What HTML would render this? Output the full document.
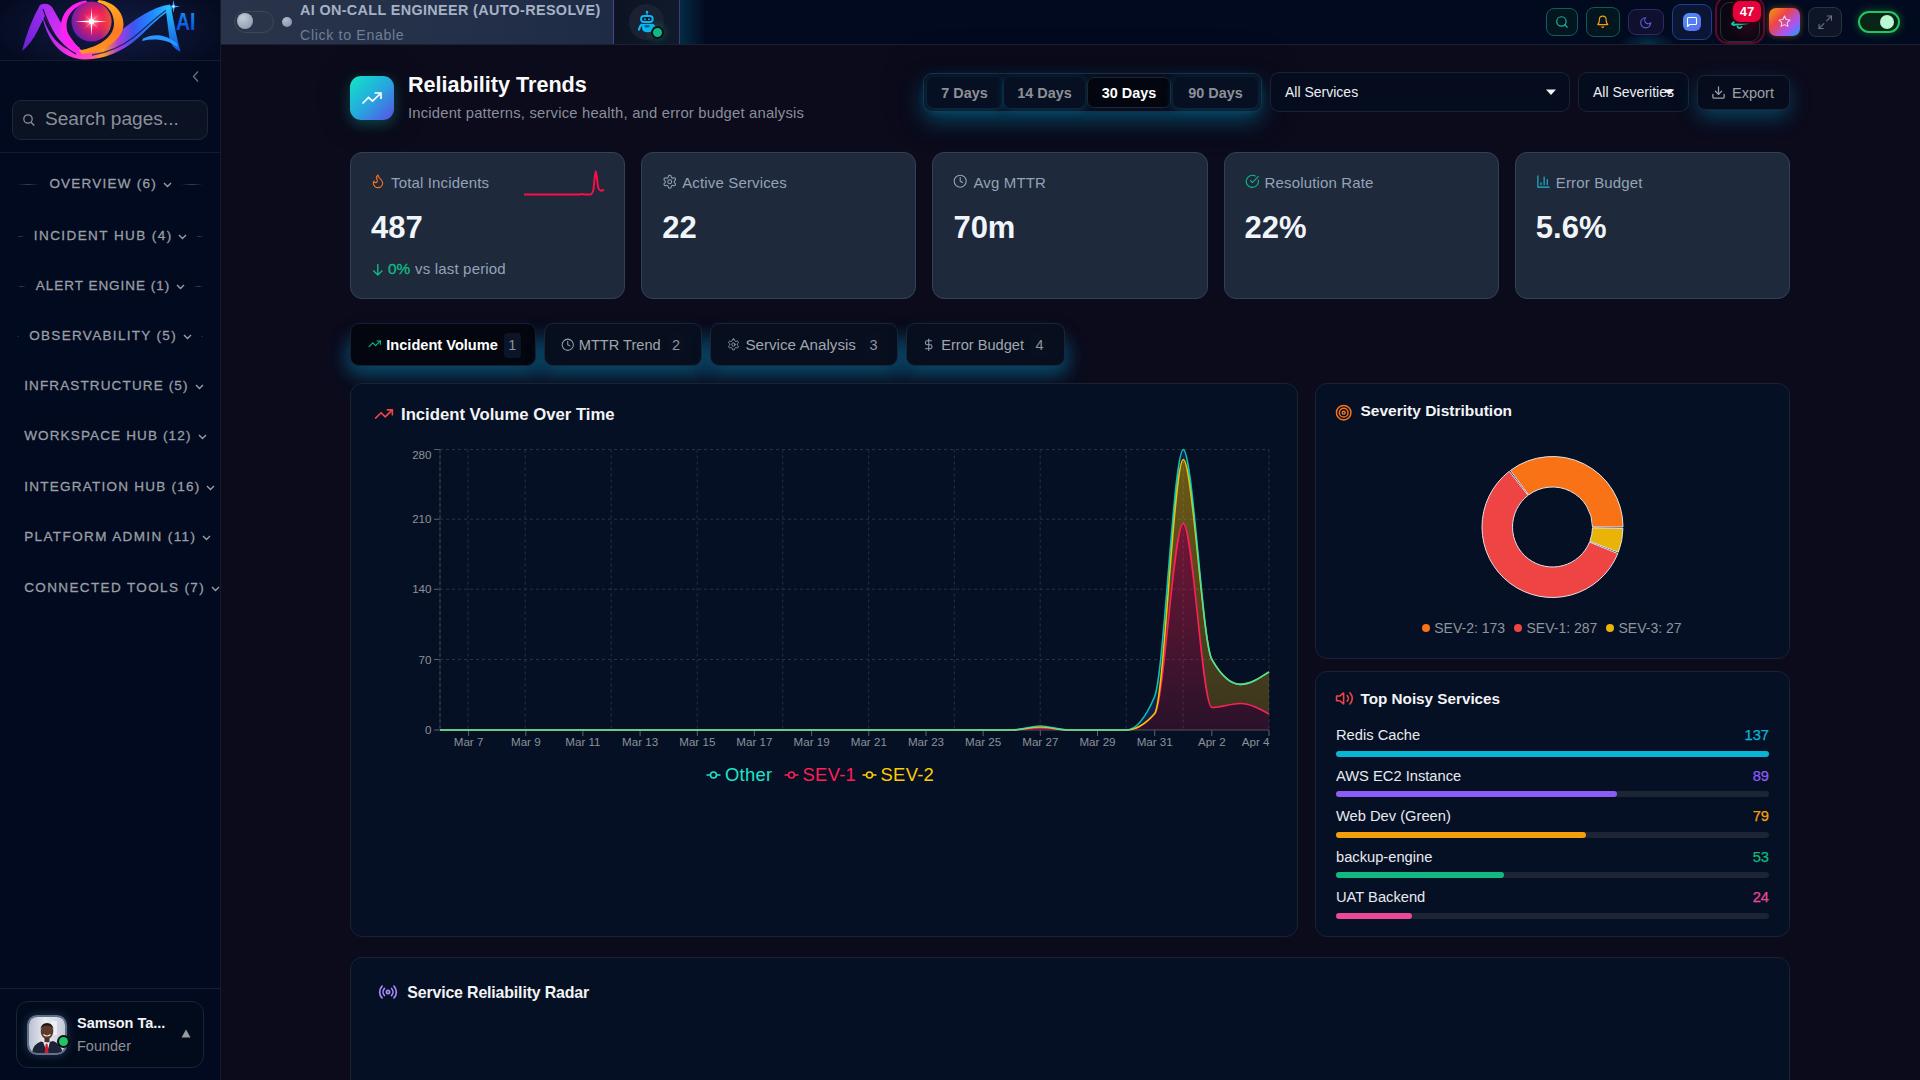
<!DOCTYPE html>
<html><head><meta charset="utf-8"><title>Reliability Trends</title>
<style>
*{box-sizing:border-box;margin:0;padding:0}
html,body{width:1920px;height:1080px;overflow:hidden;background:#0b0b1c;font-family:"Liberation Sans",sans-serif;color:#e5e7eb}
.abs{position:absolute}
.nw{white-space:nowrap}
#sidebar{position:absolute;left:0;top:0;width:221px;height:1080px;background:#010a1e;border-right:1px solid #141c2c}
#topbar{position:absolute;left:221px;top:0;width:1699px;height:45px;background:#020a1f;border-bottom:1px solid #1b2130}
.navsec{position:absolute;left:0;width:220px;height:20px}
.navsec .t{position:absolute;top:0;font-weight:normal;-webkit-text-stroke:0.3px #9b9ea5;font-size:13.5px;letter-spacing:1.3px;color:#9b9ea5;white-space:nowrap;line-height:20px}
.navsec .ln{position:absolute;top:10px;height:1px;background:linear-gradient(90deg,rgba(60,68,85,0),rgba(60,68,85,.9),rgba(60,68,85,0))}
.navsec svg{position:absolute;top:8px}
.card{position:absolute;border-radius:12px}
.kpi{background:#1e293b;border:1px solid #334157;top:152px;width:275.2px;height:147px}
.kpi .lbl{position:absolute;left:40px;top:21.3px;font-size:15px;color:#94a3b8;letter-spacing:.15px;white-space:nowrap;line-height:18px}
.kpi .val{position:absolute;left:20px;top:58px;font-size:31px;font-weight:bold;color:#f1f5f9;white-space:nowrap;line-height:34px}
.kpi svg.ic{position:absolute;left:20px;top:22px}
.tab{position:absolute;top:323px;height:43px;border-radius:9px;background:#070e1e;border:1px solid #1a2538;box-shadow:0 8px 18px -4px rgba(8,90,120,.55)}
.tab .tx{position:absolute;top:12px;font-size:14.6px;color:#a3a6ad;white-space:nowrap;line-height:18px}
.tab .bd{position:absolute;top:9px;width:17px;height:25px;border-radius:4px;background:#0b1527;color:#8e939c;font-size:14.5px;line-height:25px;text-align:center}
.panel{position:absolute;background:#061024;border:1px solid #192334;border-radius:12px}
.ptitle{position:absolute;font-size:17px;font-weight:bold;color:#f3f4f6;white-space:nowrap;line-height:20px}
</style></head>
<body>
<!-- SIDEBAR -->
<div id="sidebar">
  <div class="abs" style="left:0;top:0;width:220px;height:60px;background:radial-gradient(ellipse 120px 50px at 110px 28px,#131c42 0%,#0c1434 50%,#040b20 100%)"></div>
  <div class="abs" style="left:0;top:60px;width:220px;height:1px;background:#141b2b"></div>
  <!-- logo placeholder -->
  <div id="logo" class="abs" style="left:0;top:0;width:220px;height:60px"><svg width="220" height="60" viewBox="0 0 220 60">
<defs>
<linearGradient id="lgLeaf" x1="0" y1="1" x2="0.6" y2="0"><stop offset="0" stop-color="#6a1fd6"/><stop offset="1" stop-color="#9d2cf0"/></linearGradient>
<linearGradient id="lgRib" x1="0" y1="0" x2="1" y2="1"><stop offset="0" stop-color="#a42cf2"/><stop offset=".6" stop-color="#e02ff0"/><stop offset="1" stop-color="#ff2ee6"/></linearGradient>
<linearGradient id="lgSw" x1="44" y1="0" x2="172" y2="0" gradientUnits="userSpaceOnUse"><stop offset="0" stop-color="#9b2cf0"/><stop offset=".2" stop-color="#ff2fe2"/><stop offset=".36" stop-color="#ff4fb0"/><stop offset=".46" stop-color="#ff9d22"/><stop offset=".58" stop-color="#b03ad8"/><stop offset=".7" stop-color="#3d55f2"/><stop offset=".85" stop-color="#1f8cff"/><stop offset="1" stop-color="#2ac6ff"/></linearGradient>
<linearGradient id="lgOr" x1="0" y1="0" x2="0" y2="1"><stop offset="0" stop-color="#ffb21e"/><stop offset=".6" stop-color="#ff7a22"/><stop offset="1" stop-color="#ff9a1a"/></linearGradient>
<radialGradient id="lgSph" cx=".6" cy=".45" r=".7"><stop offset="0" stop-color="#ff4a6a"/><stop offset=".3" stop-color="#f01e5a"/><stop offset=".65" stop-color="#a01c8c"/><stop offset="1" stop-color="#4a22c0"/></radialGradient>
<linearGradient id="lgSph2" x1="0" y1="0" x2="1" y2="0"><stop offset="0" stop-color="#4020c0" stop-opacity=".0"/><stop offset=".7" stop-color="#ff5a20" stop-opacity="0"/><stop offset="1" stop-color="#ff6a1a" stop-opacity=".75"/></linearGradient>
<linearGradient id="lgA" x1="0" y1="0" x2="0" y2="1"><stop offset="0" stop-color="#27c2ff"/><stop offset="1" stop-color="#1456e0"/></linearGradient>
<linearGradient id="lgAI" x1="0" y1="0" x2="0" y2="1"><stop offset="0" stop-color="#139cff"/><stop offset="1" stop-color="#0a3ed0"/></linearGradient>
<radialGradient id="lgGlow" cx=".5" cy=".5" r=".5"><stop offset="0" stop-color="#fff" stop-opacity=".9"/><stop offset=".4" stop-color="#ffb0c0" stop-opacity=".45"/><stop offset="1" stop-color="#ff4080" stop-opacity="0"/></radialGradient>
</defs>
<path d="M22,51 Q29,24 40,5 Q46,2 51,6 Q43,18 38,30 Q31,44 22,51Z" fill="url(#lgLeaf)"/>
<path d="M41,10 C47,34 60,51 80,52 C95,52 105,44 118,33 C135,19 152,7 170,4.5 L172,9 C160,16 150,27 138,38 C122,52 105,59 85,59.5 C62,59 46,42 41,10Z" fill="url(#lgSw)"/>
<path d="M41,6 Q47,2 52,7 Q61,24 71,38 Q77,47 84,52 L75,55 Q62,46 52,31 Q45,19 41,6Z" fill="url(#lgRib)"/>
<path d="M43,9 Q48,24 55,35 Q63,47 76,54" fill="none" stroke="#0c0f2e" stroke-width="1.1"/>
<path d="M171,7 C158,15 146,27 134,37 C120,48 106,53 92,55" fill="none" stroke="#0e1a50" stroke-width="1.3" opacity=".8"/>
<circle cx="91.5" cy="21.5" r="22.5" fill="#101545"/>
<path d="M86,0.5 C72,2 62,12 61,25 C60,36 66,45 76,51 L80,48 C71,42 66.5,34 66.5,25 C67,14 75,5 88,3Z" fill="#ff22ee"/>
<path d="M99,0 C114,2 123.5,12 123.5,24 C123.5,39 106,51 82,54 L79,50.5 C99,47 114,37 114,23.5 C114,12 107,4.5 97,2Z" fill="url(#lgOr)"/>
<circle cx="91.5" cy="21.5" r="20" fill="url(#lgSph)"/>
<circle cx="91.5" cy="21.5" r="20" fill="url(#lgSph2)"/>
<circle cx="91.5" cy="21.5" r="9" fill="url(#lgGlow)"/>
<path d="M91.5,8 L92.4,20.6 L107,21.5 L92.4,22.4 L91.5,36 L90.6,22.4 L75,21.5 L90.6,20.6Z" fill="#fff"/>
<path d="M84,14 L92,21.5 L99,29 L91,21.5Z M99,14 L92,21.5 L84,29 L91,21.5Z" fill="#fff" opacity=".7"/>
<circle cx="91.5" cy="21.5" r="2.6" fill="#fff"/>
<path d="M165.5,7 L171,6.5 C174,24 177,39 180.5,51.5 C175,49.5 171,45 169.5,39 C168,27 166.5,16 165.5,7Z" fill="url(#lgA)"/>
<path d="M143,38.5 C154,33 166,34 177,43.5 L177.5,47 C167,39.5 155,38 142,41Z" fill="#2a98ff"/>
<path d="M173.5,0 L174.6,5.4 L180,6.5 L174.6,7.6 L173.5,13 L172.4,7.6 L167,6.5 L172.4,5.4Z" fill="#3aa6ff"/>
<circle cx="173.5" cy="6.5" r="1.2" fill="#dff2ff"/>
<text x="176" y="29.8" font-family="Liberation Sans" font-weight="bold" font-size="24.5" fill="url(#lgAI)" textLength="19.5" lengthAdjust="spacingAndGlyphs">AI</text>
</svg></div>
  <svg class="abs" style="left:190px;top:70px" width="12" height="13" viewBox="0 0 12 13"><path d="M8 1.5 L3.5 6.5 L8 11.5" fill="none" stroke="#6b7280" stroke-width="1.3"/></svg>
  <div class="abs" style="left:12px;top:100px;width:196px;height:40px;border-radius:9px;border:1px solid #1e2637;background:#0a1224"></div>
  <svg class="abs" style="left:22px;top:112px" width="14" height="16" viewBox="0 0 14 16"><circle cx="6" cy="7" r="4.2" fill="none" stroke="#8a8f98" stroke-width="1.3"/><path d="M9 10.2 L12.3 13.5" stroke="#8a8f98" stroke-width="1.3"/></svg>
  <div class="abs nw" style="left:45px;top:107.5px;font-size:19.1px;color:#8b9099;line-height:22px">Search pages...</div>
  <div class="abs" style="left:0;top:152px;width:220px;height:1px;background:#141b2b"></div>
  <div id="nav">
<div class="navsec" style="top:174.3px"><div class="ln" style="left:17px;width:22.4px"></div><div class="ln" style="left:180.7px;width:22.3px"></div><div class="t" style="left:49.4px;letter-spacing:1.229px">OVERVIEW (6)</div><svg style="left:162.7px" width="9" height="6" viewBox="0 0 9 6"><path d="M1 1 L4.5 4.5 L8 1" fill="none" stroke="#9b9ea5" stroke-width="1.4"/></svg></div>
<div class="navsec" style="top:225.5px"><div class="ln" style="left:17px;width:6.8px"></div><div class="ln" style="left:196.2px;width:6.8px"></div><div class="t" style="left:33.8px;letter-spacing:1.425px">INCIDENT HUB (4)</div><svg style="left:178.2px" width="9" height="6" viewBox="0 0 9 6"><path d="M1 1 L4.5 4.5 L8 1" fill="none" stroke="#9b9ea5" stroke-width="1.4"/></svg></div>
<div class="navsec" style="top:275.5px"><div class="ln" style="left:17px;width:8.8px"></div><div class="ln" style="left:194.2px;width:8.8px"></div><div class="t" style="left:35.8px;letter-spacing:0.973px">ALERT ENGINE (1)</div><svg style="left:176.2px" width="9" height="6" viewBox="0 0 9 6"><path d="M1 1 L4.5 4.5 L8 1" fill="none" stroke="#9b9ea5" stroke-width="1.4"/></svg></div>
<div class="navsec" style="top:326.3px"><div class="ln" style="left:17px;width:2.2px"></div><div class="ln" style="left:200.8px;width:2.2px"></div><div class="t" style="left:29.2px;letter-spacing:1.325px">OBSERVABILITY (5)</div><svg style="left:182.8px" width="9" height="6" viewBox="0 0 9 6"><path d="M1 1 L4.5 4.5 L8 1" fill="none" stroke="#9b9ea5" stroke-width="1.4"/></svg></div>
<div class="navsec" style="top:376.3px"><div class="t" style="left:24.2px;letter-spacing:1.132px">INFRASTRUCTURE (5)</div><svg style="left:194.5px" width="9" height="6" viewBox="0 0 9 6"><path d="M1 1 L4.5 4.5 L8 1" fill="none" stroke="#9b9ea5" stroke-width="1.4"/></svg></div>
<div class="navsec" style="top:426.0px"><div class="t" style="left:24.2px;letter-spacing:1.145px">WORKSPACE HUB (12)</div><svg style="left:197.5px" width="9" height="6" viewBox="0 0 9 6"><path d="M1 1 L4.5 4.5 L8 1" fill="none" stroke="#9b9ea5" stroke-width="1.4"/></svg></div>
<div class="navsec" style="top:476.5px"><div class="t" style="left:24.2px;letter-spacing:1.249px">INTEGRATION HUB (16)</div><svg style="left:206.2px" width="9" height="6" viewBox="0 0 9 6"><path d="M1 1 L4.5 4.5 L8 1" fill="none" stroke="#9b9ea5" stroke-width="1.4"/></svg></div>
<div class="navsec" style="top:526.5px"><div class="t" style="left:24.2px;letter-spacing:1.388px">PLATFORM ADMIN (11)</div><svg style="left:202.0px" width="9" height="6" viewBox="0 0 9 6"><path d="M1 1 L4.5 4.5 L8 1" fill="none" stroke="#9b9ea5" stroke-width="1.4"/></svg></div>
<div class="navsec" style="top:578.0px"><div class="t" style="left:24.2px;letter-spacing:1.373px">CONNECTED TOOLS (7)</div><svg style="left:210.8px" width="9" height="6" viewBox="0 0 9 6"><path d="M1 1 L4.5 4.5 L8 1" fill="none" stroke="#9b9ea5" stroke-width="1.4"/></svg></div>
</div>
  <div class="abs" style="left:0;top:988px;width:220px;height:1px;background:#182033"></div>
  <div class="abs" style="left:16px;top:1001px;width:188px;height:67px;border-radius:12px;border:1px solid #1b2335;background:#020b1c"></div>
  <div id="avatar" class="abs" style="left:27px;top:1015px;width:40px;height:40px;border-radius:10px;overflow:hidden;border:2px solid #627189;box-shadow:0 0 10px rgba(120,150,210,.3)"><svg width="36" height="36" viewBox="0 0 36 36"><defs><linearGradient id="avbg" x1="0" y1="0" x2="1" y2="0"><stop offset="0" stop-color="#b9c0d0"/><stop offset=".45" stop-color="#e9ecf3"/><stop offset="1" stop-color="#c3cad8"/></linearGradient></defs><rect width="36" height="36" fill="url(#avbg)"/><rect x="22" y="4" width="6" height="14" fill="#f5f7fb" opacity=".7"/><path d="M3 36 Q4 27 12 24.5 L17 26 L24 24 Q31 26 34 36Z" fill="#1c2238"/><path d="M14 24.5 L18 36 L21 24.5 L17.5 26.5Z" fill="#f1f1f4"/><path d="M16.6 27 L18.6 27 L19.6 36 L15.6 36Z" fill="#d0192c"/><ellipse cx="18" cy="14.5" rx="6.3" ry="7.6" fill="#5e3a2a"/><path d="M11.6 12.5 Q12 6.2 18 6 Q24 6.2 24.4 12.5 Q23 8.8 18 8.6 Q13 8.8 11.6 12.5Z" fill="#21150f"/><path d="M14.5 17.5 Q18 20.5 21.5 17.5" stroke="#f2e6e0" stroke-width="1.2" fill="none"/><rect x="15.5" y="21" width="5" height="4" fill="#4e2f22"/></svg></div>
<div class="abs" style="left:58.5px;top:1037px;width:9px;height:9px;border-radius:50%;background:#22c55e;box-shadow:0 0 0 2px #04101c"></div>
  <div class="abs nw" style="left:77px;top:1014px;font-size:14.5px;font-weight:bold;color:#f3f4f6;line-height:18px">Samson Ta...</div>
  <div class="abs nw" style="left:77px;top:1037px;font-size:14.5px;color:#8e8f93;line-height:18px">Founder</div>
  <svg class="abs" style="left:181px;top:1029px" width="10" height="9" viewBox="0 0 10 9"><path d="M5 0.5 L9.5 8.5 L0.5 8.5Z" fill="#9a9a9c"/></svg>
</div>

<!-- TOPBAR -->
<div id="topbar"></div>
<!-- AI oncall panel -->
<div class="abs" style="left:221px;top:0;width:392px;height:44px;background:linear-gradient(90deg,#29344a 0%,#243049 60%,#1e2b45 100%)"></div>
<div class="abs" style="left:234px;top:11px;width:40px;height:22px;border-radius:11px;background:#2a3549;border:1px solid #3c4759"></div>
<div class="abs" style="left:237px;top:13px;width:16px;height:16px;border-radius:50%;background:radial-gradient(circle at 35% 30%,#c3cbd9,#8592a8)"></div>
<div class="abs" style="left:282px;top:17px;width:10px;height:10px;border-radius:50%;background:radial-gradient(circle at 35% 30%,#b4bdcc,#7e8aa0)"></div>
<div class="abs nw" style="left:300px;top:1px;font-size:14.4px;font-weight:bold;letter-spacing:0.35px;color:#a5b2c6;line-height:18px">AI ON-CALL ENGINEER (AUTO-RESOLVE)</div>
<div class="abs nw" style="left:300px;top:26px;font-size:14.2px;letter-spacing:0.65px;color:#6f7e96;line-height:18px">Click to Enable</div>
<div class="abs" style="left:613px;top:0;width:1px;height:44px;background:#4b4391"></div>
<div class="abs" style="left:614px;top:0;width:65px;height:44px;background:linear-gradient(90deg,#0c1322,#111a2b)"></div>
<div class="abs" style="left:679px;top:0;width:1px;height:44px;background:#3d3a80"></div>
<div class="abs" style="left:680px;top:0;width:26px;height:44px;background:linear-gradient(90deg,rgba(8,130,160,.28),rgba(8,130,160,0))"></div>
<div class="abs" style="left:629px;top:4px;width:35px;height:36px;border-radius:50%;background:#1a2132"></div>
<svg class="abs" style="left:636px;top:9px" width="22" height="24" viewBox="0 0 22 24">
 <circle cx="11" cy="3" r="1.35" fill="#0bb6f2"/><rect x="10.4" y="3.5" width="1.2" height="3" fill="#0bb6f2"/>
 <rect x="5.1" y="7.1" width="11.6" height="5.8" rx="2.9" fill="#0e1628" stroke="#0bb6f2" stroke-width="2"/>
 <circle cx="9" cy="10.2" r="1" fill="#0bb6f2"/><circle cx="13" cy="10.2" r="1" fill="#0bb6f2"/>
 <path d="M6.1 15 Q11.6 14.3 17.1 15 L17.1 19.5 Q17 23.2 11.6 23.2 Q6.2 23.2 6.1 19.5Z" fill="#0bb6f2"/>
 <rect x="8.5" y="16" width="5" height="2.4" rx="1" fill="#0a5f88"/>
 <path d="M5.4 15.8 Q3.4 17.5 3 20.5" stroke="#0bb6f2" stroke-width="2.3" fill="none" stroke-linecap="round"/>
 <path d="M16.8 15.8 Q18.3 16.8 18.6 18" stroke="#0bb6f2" stroke-width="2" fill="none" stroke-linecap="round"/>
</svg>
<div class="abs" style="left:651.3px;top:26.3px;width:13.2px;height:13.2px;border-radius:50%;background:#12b981;border:2.1px solid #0a0f1a;box-shadow:0 0 9px rgba(16,185,125,.45)"></div>

<!-- right icons -->
<div class="abs" style="left:1546px;top:8px;width:32px;height:28px;border-radius:8px;background:#03161f;border:1px solid #0f5f5a"></div>
<svg class="abs" style="left:1555px;top:14.6px" width="14" height="14" viewBox="0 0 24 24" fill="none" stroke="#15b8a6" stroke-width="2" stroke-linecap="round" stroke-linejoin="round"><circle cx="11" cy="11" r="8"/><path d="m21 21-4.3-4.3"/></svg>
<div class="abs" style="left:1586px;top:7px;width:34px;height:30px;border-radius:8px;background:#03161f;border:1px solid #0f5a55"></div>
<svg class="abs" style="left:1596.3px;top:14.9px" width="13.5" height="13.5" viewBox="0 0 24 24" fill="none" stroke="#f59e0b" stroke-width="2" stroke-linecap="round" stroke-linejoin="round"><path d="M6 8a6 6 0 0 1 12 0c0 7 3 9 3 9H3s3-2 3-9"/><path d="M10.3 21a1.94 1.94 0 0 0 3.4 0"/></svg>
<div class="abs" style="left:1620px;top:20px;width:56px;height:24px;background:radial-gradient(ellipse 28px 12px at 50% 100%,rgba(10,120,150,.35),rgba(10,120,150,0))"></div>
<div class="abs" style="left:1628px;top:9px;width:36px;height:26px;border-radius:8px;background:#0f0f2e;border:1px solid #2a2a6a"></div>
<svg class="abs" style="left:1639.25px;top:15.95px" width="13.5" height="13.5" viewBox="0 0 24 24" fill="none" stroke="#5b5bd6" stroke-width="2" stroke-linecap="round" stroke-linejoin="round"><path d="M12 3a6 6 0 0 0 9 9 9 9 0 1 1-9-9Z"/></svg>
<div class="abs" style="left:1672px;top:4px;width:40px;height:36px;border-radius:9px;background:#0b1634;border:1px solid #1d3f8f"></div>
<div class="abs" style="left:1683px;top:13px;width:18px;height:18px;border-radius:6px;background:linear-gradient(135deg,#4f8ff7,#5b6cf0)"></div>
<svg class="abs" style="left:1685.95px;top:16.15px" width="12" height="12" viewBox="0 0 24 24" fill="none" stroke="#ffffff" stroke-width="2.2" stroke-linecap="round" stroke-linejoin="round"><path d="M21 15a2 2 0 0 1-2 2H7l-4 4V5a2 2 0 0 1 2-2h14a2 2 0 0 1 2 2z"/></svg>
<div class="abs" style="left:1715px;top:-4px;width:49.5px;height:48px;border-radius:13px;border:2.4px solid #5e0a2a;background:radial-gradient(ellipse 60% 50% at 65% 60%,#2a0618 0%,#0a0612 80%)"></div>
<div class="abs" style="left:1720px;top:2px;width:40px;height:40px;border-radius:10px;border:1px solid #2a2e3b"></div>
<svg class="abs" style="left:1731px;top:20px" width="20" height="11" viewBox="0 0 20 11"><path d="M1 4 L3 2 M2 5 L17 3" stroke="#14c4a8" stroke-width="1.8" stroke-linecap="round"/><path d="M6.5 6.5 Q8 9.5 10.5 6.8" stroke="#14c4a8" stroke-width="1.8" fill="none" stroke-linecap="round"/></svg>
<div class="abs" style="left:1733px;top:1px;width:28px;height:21px;border-radius:7px;background:#e6023c;box-shadow:0 0 0 1.8px #32040f;color:#fff;font-weight:bold;font-size:13px;line-height:21px;text-align:center">47</div>
<div class="abs" style="left:1769px;top:8px;width:31px;height:28px;border-radius:7px;background:linear-gradient(135deg,#f59e0b 0%,#ef4444 35%,#a855f7 70%,#0ea5e9 100%);box-shadow:0 0 6px rgba(245,140,30,.45)"></div>
<svg class="abs" style="left:1777.5px;top:15.1px" width="13" height="13" viewBox="0 0 24 24" fill="none" stroke="#f5d0fe" stroke-width="2" stroke-linecap="round" stroke-linejoin="round"><polygon points="12 2 15.09 8.26 22 9.27 17 14.14 18.18 21.02 12 17.77 5.82 21.02 7 14.14 2 9.27 8.91 8.26 12 2"/></svg>
<div class="abs" style="left:1808px;top:7px;width:34px;height:30px;border-radius:8px;background:#0e1527;border:1px solid #2a3344"></div>
<svg class="abs" style="left:1816.65px;top:13.75px" width="16.5" height="16.5" viewBox="0 0 24 24" fill="none" stroke="#6b7486" stroke-width="1.6" stroke-linecap="round" stroke-linejoin="round"><polyline points="15 3 21 3 21 9"/><polyline points="9 21 3 21 3 15"/><line x1="21" x2="14" y1="3" y2="10"/><line x1="3" x2="10" y1="21" y2="14"/></svg>
<div class="abs" style="left:1850px;top:4px;width:60px;height:36px;border-radius:18px;background:radial-gradient(ellipse at center,rgba(0,0,0,.5),rgba(0,0,0,0) 70%)"></div>
<div class="abs" style="left:1858px;top:11px;width:42px;height:22px;border-radius:11px;background:#0a2418;border:2px solid #22c55e;box-shadow:0 0 8px rgba(34,197,94,.45)"></div>
<div class="abs" style="left:1880px;top:15px;width:14px;height:14px;border-radius:50%;background:#bbf7d0"></div>


<!-- MAIN -->
<div id="main">
<!--MAIN1-->
<div class="abs" style="left:350px;top:76px;width:44px;height:44px;border-radius:11px;background:linear-gradient(135deg,#0fe8c6 0%,#27a6df 52%,#5a4ee6 100%);box-shadow:0 4px 14px rgba(20,200,180,.33),0 0 30px 6px rgba(0,0,0,.2)"></div>
<svg class="abs" style="left:361px;top:91px" width="22" height="15" viewBox="0 0 22 15"><path d="M1.5 12.5 L7.5 6.5 L11.5 10 L19.5 2.5 M13.5 2 L20 2 L20 8" fill="none" stroke="#fff" stroke-width="1.7" stroke-linejoin="miter"/></svg>
<div class="abs nw" style="left:408px;top:72px;font-size:21.6px;font-weight:bold;color:#fafafa;line-height:26px">Reliability Trends</div>
<div class="abs nw" style="left:408px;top:104px;font-size:14.8px;letter-spacing:0.2px;color:#8a8e99;line-height:18px">Incident patterns, service health, and error budget analysis</div>
<div class="abs" style="left:923px;top:73px;width:339px;height:39px;border-radius:9px;background:#081020;border:1px solid #15304a;box-shadow:0 9px 22px -1px rgba(6,115,155,.6),0 0 36px 8px rgba(0,0,0,.22)"></div>
<div class="abs" style="left:927px;top:77px;width:75px;height:31px;border-radius:7px;background:#071022;box-shadow:0 2px 10px rgba(8,110,150,.45);color:#8d9097;font-weight:bold;font-size:14.4px;line-height:33px;text-align:center">7 Days</div>
<div class="abs" style="left:1004px;top:77px;width:81px;height:31px;border-radius:7px;background:#071022;box-shadow:0 2px 10px rgba(8,110,150,.45);color:#8d9097;font-weight:bold;font-size:14.4px;line-height:33px;text-align:center">14 Days</div>
<div class="abs" style="left:1087px;top:77px;width:84px;height:31px;border-radius:7px;background:#03060e;border:1px solid #1d2636;color:#fff;font-weight:bold;font-size:14.4px;line-height:31px;text-align:center">30 Days</div>
<div class="abs" style="left:1173px;top:77px;width:85px;height:31px;border-radius:7px;background:#071022;box-shadow:0 2px 10px rgba(8,110,150,.45);color:#8d9097;font-weight:bold;font-size:14.4px;line-height:33px;text-align:center">90 Days</div>
<div class="abs" style="left:1270px;top:72px;width:300px;height:40px;border-radius:9px;background:#050c1e;border:1px solid #1a2334"></div>
<div class="abs nw" style="left:1285px;top:83px;font-size:14px;color:#eceff3;line-height:18px">All Services</div>
<svg class="abs" style="left:1545px;top:88.5px" width="12" height="7" viewBox="0 0 12 7"><path d="M1 0.5 L11 0.5 L6 6Z" fill="#f1f1f1"/></svg>
<div class="abs" style="left:1578px;top:72px;width:111px;height:40px;border-radius:9px;background:#050c1e;border:1px solid #1a2334"></div>
<div class="abs nw" style="left:1593px;top:83px;font-size:14px;color:#eceff3;line-height:18px">All Severities</div>
<svg class="abs" style="left:1663px;top:88.5px" width="12" height="7" viewBox="0 0 12 7"><path d="M1 0.5 L11 0.5 L6 6Z" fill="#f1f1f1"/></svg>
<div class="abs" style="left:1697px;top:75px;width:93px;height:35px;border-radius:8px;background:#060c1c;border:1px solid #1a2436;box-shadow:0 8px 20px -2px rgba(6,120,160,.55)"></div>
<svg class="abs" style="left:1711.3px;top:85.3px" width="15" height="15" viewBox="0 0 24 24" fill="none" stroke="#9aa1ab" stroke-width="2" stroke-linecap="round" stroke-linejoin="round"><path d="M21 15v4a2 2 0 0 1-2 2H5a2 2 0 0 1-2-2v-4"/><polyline points="7 10 12 15 17 10"/><line x1="12" x2="12" y1="15" y2="3"/></svg>
<div class="abs nw" style="left:1732px;top:84px;font-size:14.5px;color:#9aa0a9;line-height:18px">Export</div>
<div class="card kpi" style="left:350px;width:275.2px"><svg class="ic" style="left:19px;top:19.5px" width="16" height="16" viewBox="0 0 24 24" fill="none" stroke="#f97316" stroke-width="1.7" stroke-linecap="round" stroke-linejoin="round"><path d="M8.5 14.5A2.5 2.5 0 0 0 11 12c0-1.38-.5-2-1-3-1.072-2.143-.224-4.054 2-6 .5 2.5 2 4.9 4 6.5 2 1.6 3 3.5 3 5.5a7 7 0 1 1-14 0c0-1.153.433-2.294 1-3a2.5 2.5 0 0 0 2.5 2.5z"/></svg><div class="lbl">Total Incidents</div><div class="val">487</div>
<svg class="abs" style="left:0;top:0;overflow:visible" width="1" height="1"><g transform="translate(-351,-153)"><path d="M524.00,194.40C524.92,194.40,525.84,194.40,526.76,194.40C527.68,194.40,528.60,194.40,529.52,194.40C530.44,194.40,531.36,194.40,532.28,194.40C533.20,194.40,534.11,194.40,535.03,194.40C535.95,194.40,536.87,194.40,537.79,194.40C538.71,194.40,539.63,194.40,540.55,194.40C541.47,194.40,542.39,194.40,543.31,194.40C544.23,194.40,545.15,194.40,546.07,194.40C546.99,194.40,547.91,194.40,548.83,194.40C549.75,194.40,550.67,194.40,551.59,194.40C552.51,194.40,553.43,194.40,554.34,194.40C555.26,194.40,556.18,194.40,557.10,194.40C558.02,194.40,558.94,194.40,559.86,194.40C560.78,194.40,561.70,194.40,562.62,194.40C563.54,194.40,564.46,194.40,565.38,194.40C566.30,194.40,567.22,194.40,568.14,194.40C569.06,194.40,569.98,194.40,570.90,194.40C571.82,194.40,572.74,194.40,573.66,194.40C574.57,194.40,575.49,194.40,576.41,194.40C577.33,194.40,578.25,194.40,579.17,194.40C580.09,194.40,581.01,194.07,581.93,194.07C582.85,194.07,583.77,194.40,584.69,194.40C585.61,194.40,586.53,194.40,587.45,194.40C588.37,194.40,589.29,194.40,590.21,194.40C591.13,194.40,592.05,193.47,592.97,191.62C593.89,189.77,594.80,171.20,595.72,171.20C596.64,171.20,597.56,187.18,598.48,188.56C599.40,189.94,600.32,190.63,601.24,190.63C602.16,190.63,603.08,190.11,604.00,189.59" fill="none" stroke="#fb0f47" stroke-width="2" stroke-linejoin="round"/></g></svg>
<svg class="abs" style="left:21px;top:109.5px" width="12" height="14" viewBox="0 0 12 14"><path d="M5.8 1.5 L5.8 12 M1.7 8 L5.8 12 L9.9 8" fill="none" stroke="#10b981" stroke-width="1.4" stroke-linecap="round" stroke-linejoin="round"/></svg>
<div class="abs nw" style="left:37px;top:107.3px;font-size:15.4px;font-weight:normal;-webkit-text-stroke:.35px #10b981;color:#10b981;line-height:18px">0%</div>
<div class="abs nw" style="left:64px;top:107.3px;font-size:15px;letter-spacing:.18px;color:#94a3b8;line-height:18px">vs last period</div>
</div>
<div class="card kpi" style="left:641.2px;width:275.2px"><svg class="ic" style="left:19.5px;top:20.5px" width="15.5" height="15.5" viewBox="0 0 24 24" fill="none" stroke="#94a3b8" stroke-width="1.6" stroke-linecap="round" stroke-linejoin="round"><path d="M12.22 2h-.44a2 2 0 0 0-2 2v.18a2 2 0 0 1-1 1.73l-.43.25a2 2 0 0 1-2 0l-.15-.08a2 2 0 0 0-2.73.73l-.22.38a2 2 0 0 0 .73 2.73l.15.1a2 2 0 0 1 1 1.72v.51a2 2 0 0 1-1 1.74l-.15.09a2 2 0 0 0-.73 2.73l.22.38a2 2 0 0 0 2.73.73l.15-.08a2 2 0 0 1 2 0l.43.25a2 2 0 0 1 1 1.73V20a2 2 0 0 0 2 2h.44a2 2 0 0 0 2-2v-.18a2 2 0 0 1 1-1.73l.43-.25a2 2 0 0 1 2 0l.15.08a2 2 0 0 0 2.73-.73l.22-.39a2 2 0 0 0-.73-2.73l-.15-.08a2 2 0 0 1-1-1.74v-.5a2 2 0 0 1 1-1.74l.15-.09a2 2 0 0 0 .73-2.73l-.22-.38a2 2 0 0 0-2.73-.73l-.15.08a2 2 0 0 1-2 0l-.43-.25a2 2 0 0 1-1-1.73V4a2 2 0 0 0-2-2z"/><circle cx="12" cy="12" r="3"/></svg><div class="lbl">Active Services</div><div class="val">22</div>
</div>
<div class="card kpi" style="left:932.4px;width:275.2px"><svg class="ic" style="left:19.6px;top:20.6px" width="14.4" height="14.4" viewBox="0 0 24 24" fill="none" stroke="#94a3b8" stroke-width="1.8" stroke-linecap="round" stroke-linejoin="round"><circle cx="12" cy="12" r="10"/><polyline points="12 6 12 12 16 14"/></svg><div class="lbl">Avg MTTR</div><div class="val">70m</div>
</div>
<div class="card kpi" style="left:1223.6px;width:275.2px"><svg class="ic" style="left:20.4px;top:20.6px" width="14.6" height="14.6" viewBox="0 0 24 24" fill="none" stroke="#10b981" stroke-width="1.8" stroke-linecap="round" stroke-linejoin="round"><path d="M21.801 10A10 10 0 1 1 17 3.335"/><path d="m9 11 3 3L22 4"/></svg><div class="lbl">Resolution Rate</div><div class="val">22%</div>
</div>
<div class="card kpi" style="left:1514.8px;width:275.2px"><svg class="ic" style="left:19.8px;top:20.8px" width="15" height="15" viewBox="0 0 24 24" fill="none" stroke="#22b8cf" stroke-width="1.8" stroke-linecap="round" stroke-linejoin="round"><path d="M3 3v18h18"/><path d="M18 17V9"/><path d="M13 17V5"/><path d="M8 17v-3"/></svg><div class="lbl">Error Budget</div><div class="val">5.6%</div>
</div>
<div class="abs" style="left:345px;top:340px;width:725px;height:36px;border-radius:14px;background:rgba(10,95,135,.55);filter:blur(9px)"></div>
<div class="tab" style="left:350px;width:186px;background:#03060f;border-color:#171f2e"><svg class="abs" style="left:17px;top:13.35px" width="13.5" height="13.5" viewBox="0 0 24 24" fill="none" stroke="#10b981" stroke-width="2" stroke-linecap="round" stroke-linejoin="round"><polyline points="22 7 13.5 15.5 8.5 10.5 2 17"/><polyline points="16 7 22 7 22 13"/></svg>
<div class="tx" style="left:35.25px;color:#fff;font-weight:bold;font-size:14.6px">Incident Volume</div>
<div class="bd" style="left:152.75px">1</div></div>
<div class="tab" style="left:544px;width:158px"><svg class="abs" style="left:15.5px;top:14px" width="13.5" height="13.5" viewBox="0 0 24 24" fill="none" stroke="#94a0b3" stroke-width="1.8" stroke-linecap="round" stroke-linejoin="round"><circle cx="12" cy="12" r="10"/><polyline points="12 6 12 12 16 14"/></svg>
<div class="tx" style="left:33.75px;color:#a1a5ad;font-weight:normal;font-size:14.6px">MTTR Trend</div>
<div class="bd" style="left:122.50px;background:#08101f">2</div></div>
<div class="tab" style="left:710px;width:188px"><svg class="abs" style="left:15.9px;top:14.3px" width="13" height="13" viewBox="0 0 24 24" fill="none" stroke="#94a0b3" stroke-width="1.8" stroke-linecap="round" stroke-linejoin="round"><path d="M12.22 2h-.44a2 2 0 0 0-2 2v.18a2 2 0 0 1-1 1.73l-.43.25a2 2 0 0 1-2 0l-.15-.08a2 2 0 0 0-2.73.73l-.22.38a2 2 0 0 0 .73 2.73l.15.1a2 2 0 0 1 1 1.72v.51a2 2 0 0 1-1 1.74l-.15.09a2 2 0 0 0-.73 2.73l.22.38a2 2 0 0 0 2.73.73l.15-.08a2 2 0 0 1 2 0l.43.25a2 2 0 0 1 1 1.73V20a2 2 0 0 0 2 2h.44a2 2 0 0 0 2-2v-.18a2 2 0 0 1 1-1.73l.43-.25a2 2 0 0 1 2 0l.15.08a2 2 0 0 0 2.73-.73l.22-.39a2 2 0 0 0-.73-2.73l-.15-.08a2 2 0 0 1-1-1.74v-.5a2 2 0 0 1 1-1.74l.15-.09a2 2 0 0 0 .73-2.73l-.22-.38a2 2 0 0 0-2.73-.73l-.15.08a2 2 0 0 1-2 0l-.43-.25a2 2 0 0 1-1-1.73V4a2 2 0 0 0-2-2z"/><circle cx="12" cy="12" r="3"/></svg>
<div class="tx" style="left:34.40px;color:#a1a5ad;font-weight:normal;font-size:15.2px">Service Analysis</div>
<div class="bd" style="left:154.00px;background:#08101f">3</div></div>
<div class="tab" style="left:906px;width:159px"><svg class="abs" style="left:15px;top:14px" width="13.5" height="13.5" viewBox="0 0 24 24" fill="none" stroke="#94a0b3" stroke-width="1.8" stroke-linecap="round" stroke-linejoin="round"><line x1="12" y1="2" x2="12" y2="22"/><path d="M17 5H9.5a3.5 3.5 0 0 0 0 7h5a3.5 3.5 0 0 1 0 7H6"/></svg>
<div class="tx" style="left:34.25px;color:#a1a5ad;font-weight:normal;font-size:14.6px">Error Budget</div>
<div class="bd" style="left:124.00px;background:#08101f">4</div></div>
<!--/MAIN1-->
<!--PANELS-->
<div class="panel" style="left:350px;top:383px;width:948px;height:554px"></div>
<svg class="abs" style="left:374.1px;top:403.7px" width="20" height="20" viewBox="0 0 24 24" fill="none" stroke="#ef4444" stroke-width="2" stroke-linecap="round" stroke-linejoin="round"><polyline points="22 7 13.5 15.5 8.5 10.5 2 17"/><polyline points="16 7 22 7 22 13"/></svg>
<div class="ptitle" style="left:401px;top:405px;font-size:16.7px">Incident Volume Over Time</div>
<div class="panel" style="left:1315px;top:383px;width:475px;height:276px"></div>
<svg class="abs" style="left:1335.3px;top:403.55px" width="17.4" height="17.4" viewBox="0 0 24 24" fill="none" stroke="#f97316" stroke-width="2" stroke-linecap="round" stroke-linejoin="round"><circle cx="12" cy="12" r="10"/><circle cx="12" cy="12" r="6"/><circle cx="12" cy="12" r="2"/></svg>
<div class="ptitle" style="left:1360.5px;top:400.7px;font-size:15.5px">Severity Distribution</div>
<div class="abs" style="left:1422px;top:624px;width:8px;height:8px;border-radius:50%;background:#f97316"></div>
<div class="abs nw" style="left:1434.25px;top:619.2px;font-size:14px;color:#8f949c;line-height:18px">SEV-2: 173</div>
<div class="abs" style="left:1514px;top:624px;width:8px;height:8px;border-radius:50%;background:#ef4444"></div>
<div class="abs nw" style="left:1526.5px;top:619.2px;font-size:14px;color:#8f949c;line-height:18px">SEV-1: 287</div>
<div class="abs" style="left:1606px;top:624px;width:8px;height:8px;border-radius:50%;background:#eab308"></div>
<div class="abs nw" style="left:1618.5px;top:619.2px;font-size:14px;color:#8f949c;line-height:18px">SEV-3: 27</div>
<div class="panel" style="left:1315px;top:671px;width:475px;height:266px"></div>
<svg class="abs" style="left:1334.7px;top:689.1px" width="18.8" height="18.8" viewBox="0 0 24 24" fill="none" stroke="#ef4444" stroke-width="2" stroke-linecap="round" stroke-linejoin="round"><polygon points="11 5 6 9 2 9 2 15 6 15 11 19 11 5"/><path d="M15.54 8.46a5 5 0 0 1 0 7.07"/><path d="M19.07 4.93a10 10 0 0 1 0 14.14"/></svg>
<div class="ptitle" style="left:1360.5px;top:689px;font-size:15.25px">Top Noisy Services</div>
<div class="abs nw" style="left:1336px;top:726.43px;font-size:14.7px;color:#e8eaee;line-height:18px">Redis Cache</div>
<div class="abs nw" style="left:1669px;width:100px;text-align:right;top:726.43px;font-size:14.7px;color:#06b6d4;line-height:18px;-webkit-text-stroke:.25px #06b6d4">137</div>
<div class="abs" style="left:1336px;top:750.70px;width:433px;height:6px;border-radius:3px;background:#1d2433"></div>
<div class="abs" style="left:1336px;top:750.70px;width:433.00px;height:6px;border-radius:3px;background:#06b6d4"></div>
<div class="abs nw" style="left:1336px;top:766.93px;font-size:14.7px;color:#e8eaee;line-height:18px">AWS EC2 Instance</div>
<div class="abs nw" style="left:1669px;width:100px;text-align:right;top:766.93px;font-size:14.7px;color:#8b5cf6;line-height:18px;-webkit-text-stroke:.25px #8b5cf6">89</div>
<div class="abs" style="left:1336px;top:791.20px;width:433px;height:6px;border-radius:3px;background:#1d2433"></div>
<div class="abs" style="left:1336px;top:791.20px;width:281.00px;height:6px;border-radius:3px;background:#8b5cf6"></div>
<div class="abs nw" style="left:1336px;top:807.43px;font-size:14.7px;color:#e8eaee;line-height:18px">Web Dev (Green)</div>
<div class="abs nw" style="left:1669px;width:100px;text-align:right;top:807.43px;font-size:14.7px;color:#f59e0b;line-height:18px;-webkit-text-stroke:.25px #f59e0b">79</div>
<div class="abs" style="left:1336px;top:831.70px;width:433px;height:6px;border-radius:3px;background:#1d2433"></div>
<div class="abs" style="left:1336px;top:831.70px;width:250.00px;height:6px;border-radius:3px;background:#f59e0b"></div>
<div class="abs nw" style="left:1336px;top:847.93px;font-size:14.7px;color:#e8eaee;line-height:18px">backup-engine</div>
<div class="abs nw" style="left:1669px;width:100px;text-align:right;top:847.93px;font-size:14.7px;color:#10b981;line-height:18px;-webkit-text-stroke:.25px #10b981">53</div>
<div class="abs" style="left:1336px;top:872.20px;width:433px;height:6px;border-radius:3px;background:#1d2433"></div>
<div class="abs" style="left:1336px;top:872.20px;width:167.75px;height:6px;border-radius:3px;background:#10b981"></div>
<div class="abs nw" style="left:1336px;top:888.43px;font-size:14.7px;color:#e8eaee;line-height:18px">UAT Backend</div>
<div class="abs nw" style="left:1669px;width:100px;text-align:right;top:888.43px;font-size:14.7px;color:#ec4899;line-height:18px;-webkit-text-stroke:.25px #ec4899">24</div>
<div class="abs" style="left:1336px;top:912.70px;width:433px;height:6px;border-radius:3px;background:#1d2433"></div>
<div class="abs" style="left:1336px;top:912.70px;width:76.00px;height:6px;border-radius:3px;background:#ec4899"></div>
<div class="panel" style="left:350px;top:957px;width:1440px;height:140px"></div>
<svg class="abs" style="left:377.9px;top:982.2px" width="20" height="20" viewBox="0 0 24 24" fill="none" stroke="#a78bfa" stroke-width="2" stroke-linecap="round" stroke-linejoin="round"><path d="M4.9 19.1C1 15.2 1 8.8 4.9 4.9"/><path d="M7.8 16.2c-2.3-2.3-2.3-6.1 0-8.5"/><circle cx="12" cy="12" r="2"/><path d="M16.2 7.8c2.3 2.3 2.3 6.1 0 8.5"/><path d="M19.1 4.9C23 8.8 23 15.1 19.1 19"/></svg>
<div class="ptitle" style="left:407.3px;top:982.6px;font-size:15.9px;letter-spacing:-0.15px">Service Reliability Radar</div>
<svg class="abs" style="left:0;top:0" width="1920" height="1080" viewBox="0 0 1920 1080">
<defs>
<linearGradient id="g1" x1="0" y1="0" x2="0" y2="1"><stop offset="0" stop-color="#e11d48" stop-opacity=".5"/><stop offset="1" stop-color="#e11d48" stop-opacity=".16"/></linearGradient>
<linearGradient id="g2" x1="0" y1="0" x2="0" y2="1"><stop offset="0" stop-color="#eab308" stop-opacity=".45"/><stop offset="1" stop-color="#eab308" stop-opacity=".22"/></linearGradient>
<linearGradient id="g3" x1="0" y1="0" x2="0" y2="1"><stop offset="0" stop-color="#1d4ed8" stop-opacity=".35"/><stop offset="1" stop-color="#1d4ed8" stop-opacity=".3"/></linearGradient>
</defs>
<line x1="440" y1="449.5" x2="1269" y2="449.5" stroke="#273142" stroke-dasharray="3 3"/>
<line x1="440" y1="519.25" x2="1269" y2="519.25" stroke="#273142" stroke-dasharray="3 3"/>
<line x1="440" y1="589.25" x2="1269" y2="589.25" stroke="#273142" stroke-dasharray="3 3"/>
<line x1="440" y1="659.5" x2="1269" y2="659.5" stroke="#273142" stroke-dasharray="3 3"/>
<line x1="440" y1="449.5" x2="440" y2="730" stroke="#273142" stroke-dasharray="3 3"/>
<line x1="468" y1="449.5" x2="468" y2="730" stroke="#273142" stroke-dasharray="3 3"/>
<line x1="525.2" y1="449.5" x2="525.2" y2="730" stroke="#273142" stroke-dasharray="3 3"/>
<line x1="611.2" y1="449.5" x2="611.2" y2="730" stroke="#273142" stroke-dasharray="3 3"/>
<line x1="697.2" y1="449.5" x2="697.2" y2="730" stroke="#273142" stroke-dasharray="3 3"/>
<line x1="782.8" y1="449.5" x2="782.8" y2="730" stroke="#273142" stroke-dasharray="3 3"/>
<line x1="868.7" y1="449.5" x2="868.7" y2="730" stroke="#273142" stroke-dasharray="3 3"/>
<line x1="954.3" y1="449.5" x2="954.3" y2="730" stroke="#273142" stroke-dasharray="3 3"/>
<line x1="1040.2" y1="449.5" x2="1040.2" y2="730" stroke="#273142" stroke-dasharray="3 3"/>
<line x1="1126.2" y1="449.5" x2="1126.2" y2="730" stroke="#273142" stroke-dasharray="3 3"/>
<line x1="1183.2" y1="449.5" x2="1183.2" y2="730" stroke="#273142" stroke-dasharray="3 3"/>
<line x1="1269" y1="449.5" x2="1269" y2="730" stroke="#273142" stroke-dasharray="3 3"/>
<line x1="434" y1="449.5" x2="440" y2="449.5" stroke="#5a6270"/>
<text x="431.5" y="458.6" text-anchor="end" font-family="Liberation Sans" font-size="11.6" fill="#8b919b">280</text>
<line x1="434" y1="519.25" x2="440" y2="519.25" stroke="#5a6270"/>
<text x="431.5" y="522.6" text-anchor="end" font-family="Liberation Sans" font-size="11.6" fill="#8b919b">210</text>
<line x1="434" y1="589.25" x2="440" y2="589.25" stroke="#5a6270"/>
<text x="431.5" y="593.2" text-anchor="end" font-family="Liberation Sans" font-size="11.6" fill="#8b919b">140</text>
<line x1="434" y1="659.5" x2="440" y2="659.5" stroke="#5a6270"/>
<text x="431.5" y="663.6" text-anchor="end" font-family="Liberation Sans" font-size="11.6" fill="#8b919b">70</text>
<line x1="434" y1="730" x2="440" y2="730" stroke="#5a6270"/>
<text x="431.5" y="733.6" text-anchor="end" font-family="Liberation Sans" font-size="11.6" fill="#8b919b">0</text>
<line x1="440" y1="449.5" x2="440" y2="730" stroke="#1a2232"/>
<line x1="440" y1="449.5" x2="440" y2="730" stroke="#3a4250" stroke-dasharray="3 3"/>
<line x1="468.6" y1="730" x2="468.6" y2="736" stroke="#5a6270"/>
<text x="468.6" y="746.3" text-anchor="middle" font-family="Liberation Sans" font-size="11.6" fill="#8b919b">Mar 7</text>
<line x1="525.8" y1="730" x2="525.8" y2="736" stroke="#5a6270"/>
<text x="525.8" y="746.3" text-anchor="middle" font-family="Liberation Sans" font-size="11.6" fill="#8b919b">Mar 9</text>
<line x1="582.9" y1="730" x2="582.9" y2="736" stroke="#5a6270"/>
<text x="582.9" y="746.3" text-anchor="middle" font-family="Liberation Sans" font-size="11.6" fill="#8b919b">Mar 11</text>
<line x1="640.1" y1="730" x2="640.1" y2="736" stroke="#5a6270"/>
<text x="640.1" y="746.3" text-anchor="middle" font-family="Liberation Sans" font-size="11.6" fill="#8b919b">Mar 13</text>
<line x1="697.3" y1="730" x2="697.3" y2="736" stroke="#5a6270"/>
<text x="697.3" y="746.3" text-anchor="middle" font-family="Liberation Sans" font-size="11.6" fill="#8b919b">Mar 15</text>
<line x1="754.4" y1="730" x2="754.4" y2="736" stroke="#5a6270"/>
<text x="754.4" y="746.3" text-anchor="middle" font-family="Liberation Sans" font-size="11.6" fill="#8b919b">Mar 17</text>
<line x1="811.6" y1="730" x2="811.6" y2="736" stroke="#5a6270"/>
<text x="811.6" y="746.3" text-anchor="middle" font-family="Liberation Sans" font-size="11.6" fill="#8b919b">Mar 19</text>
<line x1="868.8" y1="730" x2="868.8" y2="736" stroke="#5a6270"/>
<text x="868.8" y="746.3" text-anchor="middle" font-family="Liberation Sans" font-size="11.6" fill="#8b919b">Mar 21</text>
<line x1="926.0" y1="730" x2="926.0" y2="736" stroke="#5a6270"/>
<text x="926.0" y="746.3" text-anchor="middle" font-family="Liberation Sans" font-size="11.6" fill="#8b919b">Mar 23</text>
<line x1="983.1" y1="730" x2="983.1" y2="736" stroke="#5a6270"/>
<text x="983.1" y="746.3" text-anchor="middle" font-family="Liberation Sans" font-size="11.6" fill="#8b919b">Mar 25</text>
<line x1="1040.3" y1="730" x2="1040.3" y2="736" stroke="#5a6270"/>
<text x="1040.3" y="746.3" text-anchor="middle" font-family="Liberation Sans" font-size="11.6" fill="#8b919b">Mar 27</text>
<line x1="1097.5" y1="730" x2="1097.5" y2="736" stroke="#5a6270"/>
<text x="1097.5" y="746.3" text-anchor="middle" font-family="Liberation Sans" font-size="11.6" fill="#8b919b">Mar 29</text>
<line x1="1154.7" y1="730" x2="1154.7" y2="736" stroke="#5a6270"/>
<text x="1154.7" y="746.3" text-anchor="middle" font-family="Liberation Sans" font-size="11.6" fill="#8b919b">Mar 31</text>
<line x1="1211.8" y1="730" x2="1211.8" y2="736" stroke="#5a6270"/>
<text x="1211.8" y="746.3" text-anchor="middle" font-family="Liberation Sans" font-size="11.6" fill="#8b919b">Apr 2</text>
<line x1="1269.0" y1="730" x2="1269.0" y2="736" stroke="#5a6270"/>
<text x="1269.5" y="746.3" text-anchor="end" font-family="Liberation Sans" font-size="11.6" fill="#8b919b">Apr 4</text>
<line x1="440" y1="730" x2="1269" y2="730" stroke="#4a5261"/>
<path d="M440.00,730.00C449.53,730.00,459.06,730.00,468.59,730.00C478.11,730.00,487.64,730.00,497.17,730.00C506.70,730.00,516.23,730.00,525.76,730.00C535.29,730.00,544.82,730.00,554.34,730.00C563.87,730.00,573.40,730.00,582.93,730.00C592.46,730.00,601.99,730.00,611.52,730.00C621.05,730.00,630.57,730.00,640.10,730.00C649.63,730.00,659.16,730.00,668.69,730.00C678.22,730.00,687.75,730.00,697.28,730.00C706.80,730.00,716.33,730.00,725.86,730.00C735.39,730.00,744.92,730.00,754.45,730.00C763.98,730.00,773.51,730.00,783.03,730.00C792.56,730.00,802.09,730.00,811.62,730.00C821.15,730.00,830.68,730.00,840.21,730.00C849.74,730.00,859.26,730.00,868.79,730.00C878.32,730.00,887.85,730.00,897.38,730.00C906.91,730.00,916.44,730.00,925.97,730.00C935.49,730.00,945.02,730.00,954.55,730.00C964.08,730.00,973.61,730.00,983.14,730.00C992.67,730.00,1002.20,730.00,1011.72,730.00C1021.25,730.00,1030.78,728.00,1040.31,728.00C1049.84,728.00,1059.37,730.00,1068.90,730.00C1078.43,730.00,1087.95,730.00,1097.48,730.00C1107.01,730.00,1116.54,730.00,1126.07,730.00C1135.60,730.00,1145.13,724.66,1154.66,713.97C1164.18,703.29,1173.71,523.63,1183.24,523.63C1192.77,523.63,1202.30,707.46,1211.83,707.46C1221.36,707.46,1230.89,703.45,1240.41,703.45C1249.94,703.45,1259.47,708.71,1269.00,713.97L1269.00,730.00C1259.47,730.00,1249.94,730.00,1240.41,730.00C1230.89,730.00,1221.36,730.00,1211.83,730.00C1202.30,730.00,1192.77,730.00,1183.24,730.00C1173.71,730.00,1164.18,730.00,1154.66,730.00C1145.13,730.00,1135.60,730.00,1126.07,730.00C1116.54,730.00,1107.01,730.00,1097.48,730.00C1087.95,730.00,1078.43,730.00,1068.90,730.00C1059.37,730.00,1049.84,730.00,1040.31,730.00C1030.78,730.00,1021.25,730.00,1011.72,730.00C1002.20,730.00,992.67,730.00,983.14,730.00C973.61,730.00,964.08,730.00,954.55,730.00C945.02,730.00,935.49,730.00,925.97,730.00C916.44,730.00,906.91,730.00,897.38,730.00C887.85,730.00,878.32,730.00,868.79,730.00C859.26,730.00,849.74,730.00,840.21,730.00C830.68,730.00,821.15,730.00,811.62,730.00C802.09,730.00,792.56,730.00,783.03,730.00C773.51,730.00,763.98,730.00,754.45,730.00C744.92,730.00,735.39,730.00,725.86,730.00C716.33,730.00,706.80,730.00,697.28,730.00C687.75,730.00,678.22,730.00,668.69,730.00C659.16,730.00,649.63,730.00,640.10,730.00C630.57,730.00,621.05,730.00,611.52,730.00C601.99,730.00,592.46,730.00,582.93,730.00C573.40,730.00,563.87,730.00,554.34,730.00C544.82,730.00,535.29,730.00,525.76,730.00C516.23,730.00,506.70,730.00,497.17,730.00C487.64,730.00,478.11,730.00,468.59,730.00C459.06,730.00,449.53,730.00,440.00,730.00Z" fill="url(#g1)"/>
<path d="M440.00,730.00C449.53,730.00,459.06,730.00,468.59,730.00C478.11,730.00,487.64,730.00,497.17,730.00C506.70,730.00,516.23,730.00,525.76,730.00C535.29,730.00,544.82,730.00,554.34,730.00C563.87,730.00,573.40,730.00,582.93,730.00C592.46,730.00,601.99,730.00,611.52,730.00C621.05,730.00,630.57,730.00,640.10,730.00C649.63,730.00,659.16,730.00,668.69,730.00C678.22,730.00,687.75,730.00,697.28,730.00C706.80,730.00,716.33,730.00,725.86,730.00C735.39,730.00,744.92,730.00,754.45,730.00C763.98,730.00,773.51,730.00,783.03,730.00C792.56,730.00,802.09,730.00,811.62,730.00C821.15,730.00,830.68,730.00,840.21,730.00C849.74,730.00,859.26,730.00,868.79,730.00C878.32,730.00,887.85,730.00,897.38,730.00C906.91,730.00,916.44,730.00,925.97,730.00C935.49,730.00,945.02,730.00,954.55,730.00C964.08,730.00,973.61,730.00,983.14,730.00C992.67,730.00,1002.20,730.00,1011.72,730.00C1021.25,730.00,1030.78,726.99,1040.31,726.99C1049.84,726.99,1059.37,730.00,1068.90,730.00C1078.43,730.00,1087.95,730.00,1097.48,730.00C1107.01,730.00,1116.54,730.00,1126.07,730.00C1135.60,730.00,1145.13,724.49,1154.66,713.47C1164.18,702.45,1173.71,459.52,1183.24,459.52C1192.77,459.52,1202.30,642.68,1211.83,659.37C1221.36,676.07,1230.89,684.42,1240.41,684.42C1249.94,684.42,1259.47,678.16,1269.00,671.90L1269.00,713.97C1259.47,708.71,1249.94,703.45,1240.41,703.45C1230.89,703.45,1221.36,707.46,1211.83,707.46C1202.30,707.46,1192.77,523.63,1183.24,523.63C1173.71,523.63,1164.18,703.29,1154.66,713.97C1145.13,724.66,1135.60,730.00,1126.07,730.00C1116.54,730.00,1107.01,730.00,1097.48,730.00C1087.95,730.00,1078.43,730.00,1068.90,730.00C1059.37,730.00,1049.84,728.00,1040.31,728.00C1030.78,728.00,1021.25,730.00,1011.72,730.00C1002.20,730.00,992.67,730.00,983.14,730.00C973.61,730.00,964.08,730.00,954.55,730.00C945.02,730.00,935.49,730.00,925.97,730.00C916.44,730.00,906.91,730.00,897.38,730.00C887.85,730.00,878.32,730.00,868.79,730.00C859.26,730.00,849.74,730.00,840.21,730.00C830.68,730.00,821.15,730.00,811.62,730.00C802.09,730.00,792.56,730.00,783.03,730.00C773.51,730.00,763.98,730.00,754.45,730.00C744.92,730.00,735.39,730.00,725.86,730.00C716.33,730.00,706.80,730.00,697.28,730.00C687.75,730.00,678.22,730.00,668.69,730.00C659.16,730.00,649.63,730.00,640.10,730.00C630.57,730.00,621.05,730.00,611.52,730.00C601.99,730.00,592.46,730.00,582.93,730.00C573.40,730.00,563.87,730.00,554.34,730.00C544.82,730.00,535.29,730.00,525.76,730.00C516.23,730.00,506.70,730.00,497.17,730.00C487.64,730.00,478.11,730.00,468.59,730.00C459.06,730.00,449.53,730.00,440.00,730.00Z" fill="url(#g2)"/>
<path d="M440.00,730.00C449.53,730.00,459.06,730.00,468.59,730.00C478.11,730.00,487.64,730.00,497.17,730.00C506.70,730.00,516.23,730.00,525.76,730.00C535.29,730.00,544.82,730.00,554.34,730.00C563.87,730.00,573.40,730.00,582.93,730.00C592.46,730.00,601.99,730.00,611.52,730.00C621.05,730.00,630.57,730.00,640.10,730.00C649.63,730.00,659.16,730.00,668.69,730.00C678.22,730.00,687.75,730.00,697.28,730.00C706.80,730.00,716.33,730.00,725.86,730.00C735.39,730.00,744.92,730.00,754.45,730.00C763.98,730.00,773.51,730.00,783.03,730.00C792.56,730.00,802.09,730.00,811.62,730.00C821.15,730.00,830.68,730.00,840.21,730.00C849.74,730.00,859.26,730.00,868.79,730.00C878.32,730.00,887.85,730.00,897.38,730.00C906.91,730.00,916.44,730.00,925.97,730.00C935.49,730.00,945.02,730.00,954.55,730.00C964.08,730.00,973.61,730.00,983.14,730.00C992.67,730.00,1002.20,730.00,1011.72,730.00C1021.25,730.00,1030.78,725.99,1040.31,725.99C1049.84,725.99,1059.37,730.00,1068.90,730.00C1078.43,730.00,1087.95,730.00,1097.48,730.00C1107.01,730.00,1116.54,730.00,1126.07,730.00C1135.60,730.00,1145.13,718.81,1154.66,696.44C1164.18,674.07,1173.71,449.50,1183.24,449.50C1192.77,449.50,1202.30,642.68,1211.83,659.37C1221.36,676.07,1230.89,684.42,1240.41,684.42C1249.94,684.42,1259.47,678.16,1269.00,671.90L1269.00,671.90C1259.47,678.16,1249.94,684.42,1240.41,684.42C1230.89,684.42,1221.36,676.07,1211.83,659.37C1202.30,642.68,1192.77,459.52,1183.24,459.52C1173.71,459.52,1164.18,702.45,1154.66,713.47C1145.13,724.49,1135.60,730.00,1126.07,730.00C1116.54,730.00,1107.01,730.00,1097.48,730.00C1087.95,730.00,1078.43,730.00,1068.90,730.00C1059.37,730.00,1049.84,726.99,1040.31,726.99C1030.78,726.99,1021.25,730.00,1011.72,730.00C1002.20,730.00,992.67,730.00,983.14,730.00C973.61,730.00,964.08,730.00,954.55,730.00C945.02,730.00,935.49,730.00,925.97,730.00C916.44,730.00,906.91,730.00,897.38,730.00C887.85,730.00,878.32,730.00,868.79,730.00C859.26,730.00,849.74,730.00,840.21,730.00C830.68,730.00,821.15,730.00,811.62,730.00C802.09,730.00,792.56,730.00,783.03,730.00C773.51,730.00,763.98,730.00,754.45,730.00C744.92,730.00,735.39,730.00,725.86,730.00C716.33,730.00,706.80,730.00,697.28,730.00C687.75,730.00,678.22,730.00,668.69,730.00C659.16,730.00,649.63,730.00,640.10,730.00C630.57,730.00,621.05,730.00,611.52,730.00C601.99,730.00,592.46,730.00,582.93,730.00C573.40,730.00,563.87,730.00,554.34,730.00C544.82,730.00,535.29,730.00,525.76,730.00C516.23,730.00,506.70,730.00,497.17,730.00C487.64,730.00,478.11,730.00,468.59,730.00C459.06,730.00,449.53,730.00,440.00,730.00Z" fill="#12285a" fill-opacity=".75"/>
<path d="M440.00,730.00C449.53,730.00,459.06,730.00,468.59,730.00C478.11,730.00,487.64,730.00,497.17,730.00C506.70,730.00,516.23,730.00,525.76,730.00C535.29,730.00,544.82,730.00,554.34,730.00C563.87,730.00,573.40,730.00,582.93,730.00C592.46,730.00,601.99,730.00,611.52,730.00C621.05,730.00,630.57,730.00,640.10,730.00C649.63,730.00,659.16,730.00,668.69,730.00C678.22,730.00,687.75,730.00,697.28,730.00C706.80,730.00,716.33,730.00,725.86,730.00C735.39,730.00,744.92,730.00,754.45,730.00C763.98,730.00,773.51,730.00,783.03,730.00C792.56,730.00,802.09,730.00,811.62,730.00C821.15,730.00,830.68,730.00,840.21,730.00C849.74,730.00,859.26,730.00,868.79,730.00C878.32,730.00,887.85,730.00,897.38,730.00C906.91,730.00,916.44,730.00,925.97,730.00C935.49,730.00,945.02,730.00,954.55,730.00C964.08,730.00,973.61,730.00,983.14,730.00C992.67,730.00,1002.20,730.00,1011.72,730.00C1021.25,730.00,1030.78,728.00,1040.31,728.00C1049.84,728.00,1059.37,730.00,1068.90,730.00C1078.43,730.00,1087.95,730.00,1097.48,730.00C1107.01,730.00,1116.54,730.00,1126.07,730.00C1135.60,730.00,1145.13,724.66,1154.66,713.97C1164.18,703.29,1173.71,523.63,1183.24,523.63C1192.77,523.63,1202.30,707.46,1211.83,707.46C1221.36,707.46,1230.89,703.45,1240.41,703.45C1249.94,703.45,1259.47,708.71,1269.00,713.97" fill="none" stroke="#ff1f57" stroke-width="1.6"/>
<path d="M440.00,730.00C449.53,730.00,459.06,730.00,468.59,730.00C478.11,730.00,487.64,730.00,497.17,730.00C506.70,730.00,516.23,730.00,525.76,730.00C535.29,730.00,544.82,730.00,554.34,730.00C563.87,730.00,573.40,730.00,582.93,730.00C592.46,730.00,601.99,730.00,611.52,730.00C621.05,730.00,630.57,730.00,640.10,730.00C649.63,730.00,659.16,730.00,668.69,730.00C678.22,730.00,687.75,730.00,697.28,730.00C706.80,730.00,716.33,730.00,725.86,730.00C735.39,730.00,744.92,730.00,754.45,730.00C763.98,730.00,773.51,730.00,783.03,730.00C792.56,730.00,802.09,730.00,811.62,730.00C821.15,730.00,830.68,730.00,840.21,730.00C849.74,730.00,859.26,730.00,868.79,730.00C878.32,730.00,887.85,730.00,897.38,730.00C906.91,730.00,916.44,730.00,925.97,730.00C935.49,730.00,945.02,730.00,954.55,730.00C964.08,730.00,973.61,730.00,983.14,730.00C992.67,730.00,1002.20,730.00,1011.72,730.00C1021.25,730.00,1030.78,726.99,1040.31,726.99C1049.84,726.99,1059.37,730.00,1068.90,730.00C1078.43,730.00,1087.95,730.00,1097.48,730.00C1107.01,730.00,1116.54,730.00,1126.07,730.00C1135.60,730.00,1145.13,724.49,1154.66,713.47C1164.18,702.45,1173.71,459.52,1183.24,459.52C1192.77,459.52,1202.30,642.68,1211.83,659.37C1221.36,676.07,1230.89,684.42,1240.41,684.42C1249.94,684.42,1259.47,678.16,1269.00,671.90" fill="none" stroke="#f5c000" stroke-width="1.6"/>
<path d="M440.00,730.00C449.53,730.00,459.06,730.00,468.59,730.00C478.11,730.00,487.64,730.00,497.17,730.00C506.70,730.00,516.23,730.00,525.76,730.00C535.29,730.00,544.82,730.00,554.34,730.00C563.87,730.00,573.40,730.00,582.93,730.00C592.46,730.00,601.99,730.00,611.52,730.00C621.05,730.00,630.57,730.00,640.10,730.00C649.63,730.00,659.16,730.00,668.69,730.00C678.22,730.00,687.75,730.00,697.28,730.00C706.80,730.00,716.33,730.00,725.86,730.00C735.39,730.00,744.92,730.00,754.45,730.00C763.98,730.00,773.51,730.00,783.03,730.00C792.56,730.00,802.09,730.00,811.62,730.00C821.15,730.00,830.68,730.00,840.21,730.00C849.74,730.00,859.26,730.00,868.79,730.00C878.32,730.00,887.85,730.00,897.38,730.00C906.91,730.00,916.44,730.00,925.97,730.00C935.49,730.00,945.02,730.00,954.55,730.00C964.08,730.00,973.61,730.00,983.14,730.00C992.67,730.00,1002.20,730.00,1011.72,730.00C1021.25,730.00,1030.78,725.99,1040.31,725.99C1049.84,725.99,1059.37,730.00,1068.90,730.00C1078.43,730.00,1087.95,730.00,1097.48,730.00C1107.01,730.00,1116.54,730.00,1126.07,730.00C1135.60,730.00,1145.13,718.81,1154.66,696.44C1164.18,674.07,1173.71,449.50,1183.24,449.50C1192.77,449.50,1202.30,642.68,1211.83,659.37C1221.36,676.07,1230.89,684.42,1240.41,684.42C1249.94,684.42,1259.47,678.16,1269.00,671.90" fill="none" stroke="#10f0d0" stroke-width="1.6" stroke-opacity=".78"/>
<path d="M1623.00,527.00A70.5,70.5,0,0,0,1510.46,470.41L1528.65,494.89A40,40,0,0,1,1592.50,527.00Z" fill="#f97316" stroke="#dfe3ea" stroke-width="1"/>
<path d="M1509.28,471.30A70.5,70.5,0,1,0,1617.79,553.59L1589.55,542.09A40,40,0,1,1,1527.98,495.40Z" fill="#ef4444" stroke="#dfe3ea" stroke-width="1"/>
<path d="M1618.34,552.22A70.5,70.5,0,0,0,1622.98,528.48L1592.49,527.84A40,40,0,0,1,1589.85,541.31Z" fill="#eab308" stroke="#dfe3ea" stroke-width="1"/>
</svg>
<svg class="abs" style="left:706px;top:769px" width="15" height="12" viewBox="0 0 15 12"><path d="M0.5 6 L4.2 6 M10.8 6 L14.5 6" stroke="#1fe3c8" stroke-width="1.6"/><circle cx="7.5" cy="6" r="3" fill="none" stroke="#1fe3c8" stroke-width="1.6"/></svg>
<div class="abs nw" style="left:725px;top:764px;font-size:18.4px;letter-spacing:.3px;color:#1fe3c8;line-height:22px">Other</div>
<svg class="abs" style="left:783.5px;top:769px" width="15" height="12" viewBox="0 0 15 12"><path d="M0.5 6 L4.2 6 M10.8 6 L14.5 6" stroke="#ff1f55" stroke-width="1.6"/><circle cx="7.5" cy="6" r="3" fill="none" stroke="#ff1f55" stroke-width="1.6"/></svg>
<div class="abs nw" style="left:802.5px;top:764px;font-size:18.4px;letter-spacing:.3px;color:#ff1f55;line-height:22px">SEV-1</div>
<svg class="abs" style="left:861.5px;top:769px" width="15" height="12" viewBox="0 0 15 12"><path d="M0.5 6 L4.2 6 M10.8 6 L14.5 6" stroke="#ffcc00" stroke-width="1.6"/><circle cx="7.5" cy="6" r="3" fill="none" stroke="#ffcc00" stroke-width="1.6"/></svg>
<div class="abs nw" style="left:880.5px;top:764px;font-size:18.4px;letter-spacing:.3px;color:#ffcc00;line-height:22px">SEV-2</div>
<!--/PANELS-->
</div>
</body></html>
